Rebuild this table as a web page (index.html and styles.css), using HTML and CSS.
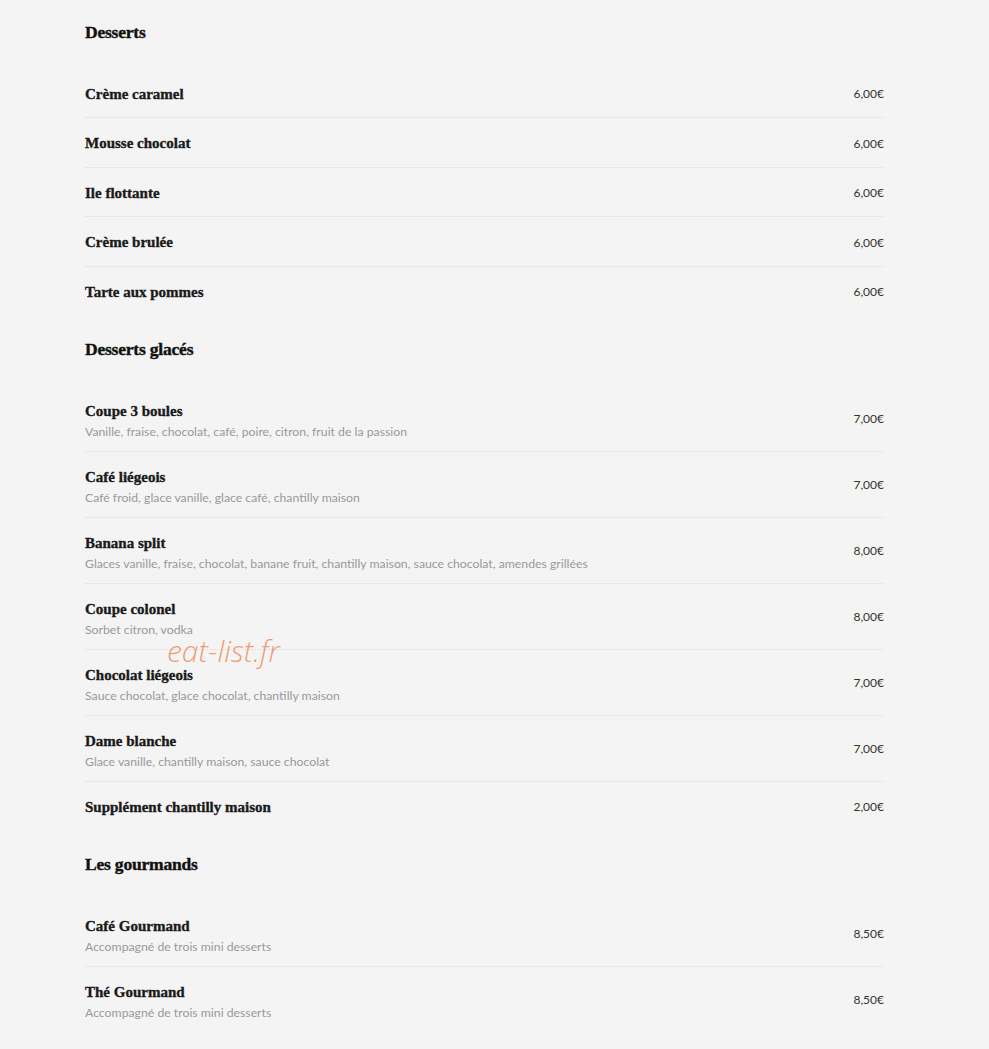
FILE: index.html
```html
<!DOCTYPE html>
<html lang="fr">
<head>
<meta charset="utf-8">
<title>Desserts</title>
<link rel="stylesheet" href="styles.css">
</head>
<body>
<main class="menu">
  <section class="section">
    <h2 class="section-title">Desserts</h2>
    <ul class="items">
      <li class="item"><div class="info"><h3 class="name">Crème caramel</h3></div><span class="price">6,00€</span></li>
      <li class="item"><div class="info"><h3 class="name">Mousse chocolat</h3></div><span class="price">6,00€</span></li>
      <li class="item"><div class="info"><h3 class="name">Ile flottante</h3></div><span class="price">6,00€</span></li>
      <li class="item"><div class="info"><h3 class="name">Crème brulée</h3></div><span class="price">6,00€</span></li>
      <li class="item"><div class="info"><h3 class="name">Tarte aux pommes</h3></div><span class="price">6,00€</span></li>
    </ul>
  </section>
  <section class="section">
    <h2 class="section-title">Desserts glacés</h2>
    <ul class="items">
      <li class="item"><div class="info"><h3 class="name">Coupe 3 boules</h3><p class="desc">Vanille, fraise, chocolat, café, poire, citron, fruit de la passion</p></div><span class="price">7,00€</span></li>
      <li class="item"><div class="info"><h3 class="name">Café liégeois</h3><p class="desc">Café froid, glace vanille, glace café, chantilly maison</p></div><span class="price">7,00€</span></li>
      <li class="item"><div class="info"><h3 class="name">Banana split</h3><p class="desc">Glaces vanille, fraise, chocolat, banane fruit, chantilly maison, sauce chocolat, amendes grillées</p></div><span class="price">8,00€</span></li>
      <li class="item"><div class="info"><h3 class="name">Coupe colonel</h3><p class="desc">Sorbet citron, vodka</p></div><span class="price">8,00€</span></li>
      <li class="item"><div class="info"><h3 class="name">Chocolat liégeois</h3><p class="desc">Sauce chocolat, glace chocolat, chantilly maison</p></div><span class="price">7,00€</span></li>
      <li class="item"><div class="info"><h3 class="name">Dame blanche</h3><p class="desc">Glace vanille, chantilly maison, sauce chocolat</p></div><span class="price">7,00€</span></li>
      <li class="item"><div class="info"><h3 class="name">Supplément chantilly maison</h3></div><span class="price">2,00€</span></li>
    </ul>
  </section>
  <section class="section">
    <h2 class="section-title">Les gourmands</h2>
    <ul class="items">
      <li class="item"><div class="info"><h3 class="name">Café Gourmand</h3><p class="desc">Accompagné de trois mini desserts</p></div><span class="price">8,50€</span></li>
      <li class="item"><div class="info"><h3 class="name">Thé Gourmand</h3><p class="desc">Accompagné de trois mini desserts</p></div><span class="price">8,50€</span></li>
    </ul>
  </section>
  <div class="watermark">eat-list.fr</div>
</main>
</body>
</html>
```

FILE: styles.css
```css
html, body {
  margin: 0;
  padding: 0;
  background: #f4f4f4;
}
body {
  font-family: "Lato", "Liberation Sans", sans-serif;
  color: #222;
}
.menu {
  position: relative;
  width: 799px;
  margin: 0 0 0 85px;
  padding-top: 20px;
}
.section + .section {
  margin-top: 22px;
}
.section-title {
  margin: 0 0 24.5px;
  font-family: "Liberation Serif", "DejaVu Serif", serif;
  font-weight: 700;
  font-size: 17.5px;
  line-height: 24px;
  letter-spacing: -0.2px;
  -webkit-text-stroke: 0.4px #111;
  color: #111;
}
.items {
  list-style: none;
  margin: 0;
  padding: 0;
}
.item {
  display: flex;
  align-items: center;
  justify-content: space-between;
  padding: 13px 0 11.5px;
  border-bottom: 1px dotted #dcdcdc;
}
.item:last-child {
  border-bottom: none;
}
.name {
  margin: 0;
  font-family: "Liberation Serif", "DejaVu Serif", serif;
  font-weight: 700;
  font-size: 15px;
  line-height: 24px;
  letter-spacing: 0;
  -webkit-text-stroke: 0.35px #1a1a1a;
  color: #1a1a1a;
}
.desc {
  margin: 0;
  padding-top: 1px;
  font-family: "Lato", "Liberation Sans", sans-serif;
  font-size: 12.25px;
  line-height: 15.5px;
  color: #999;
}
.price {
  font-family: "Lato", "Liberation Sans", sans-serif;
  font-size: 12px;
  color: #333;
}
.watermark {
  position: absolute;
  left: 82px;
  top: 639px;
  font-family: "Open Sans", "Liberation Sans", sans-serif;
  font-style: italic;
  font-weight: 300;
  font-size: 30px;
  line-height: 24px;
  color: rgba(238, 140, 92, 0.85);
  pointer-events: none;
}
```
